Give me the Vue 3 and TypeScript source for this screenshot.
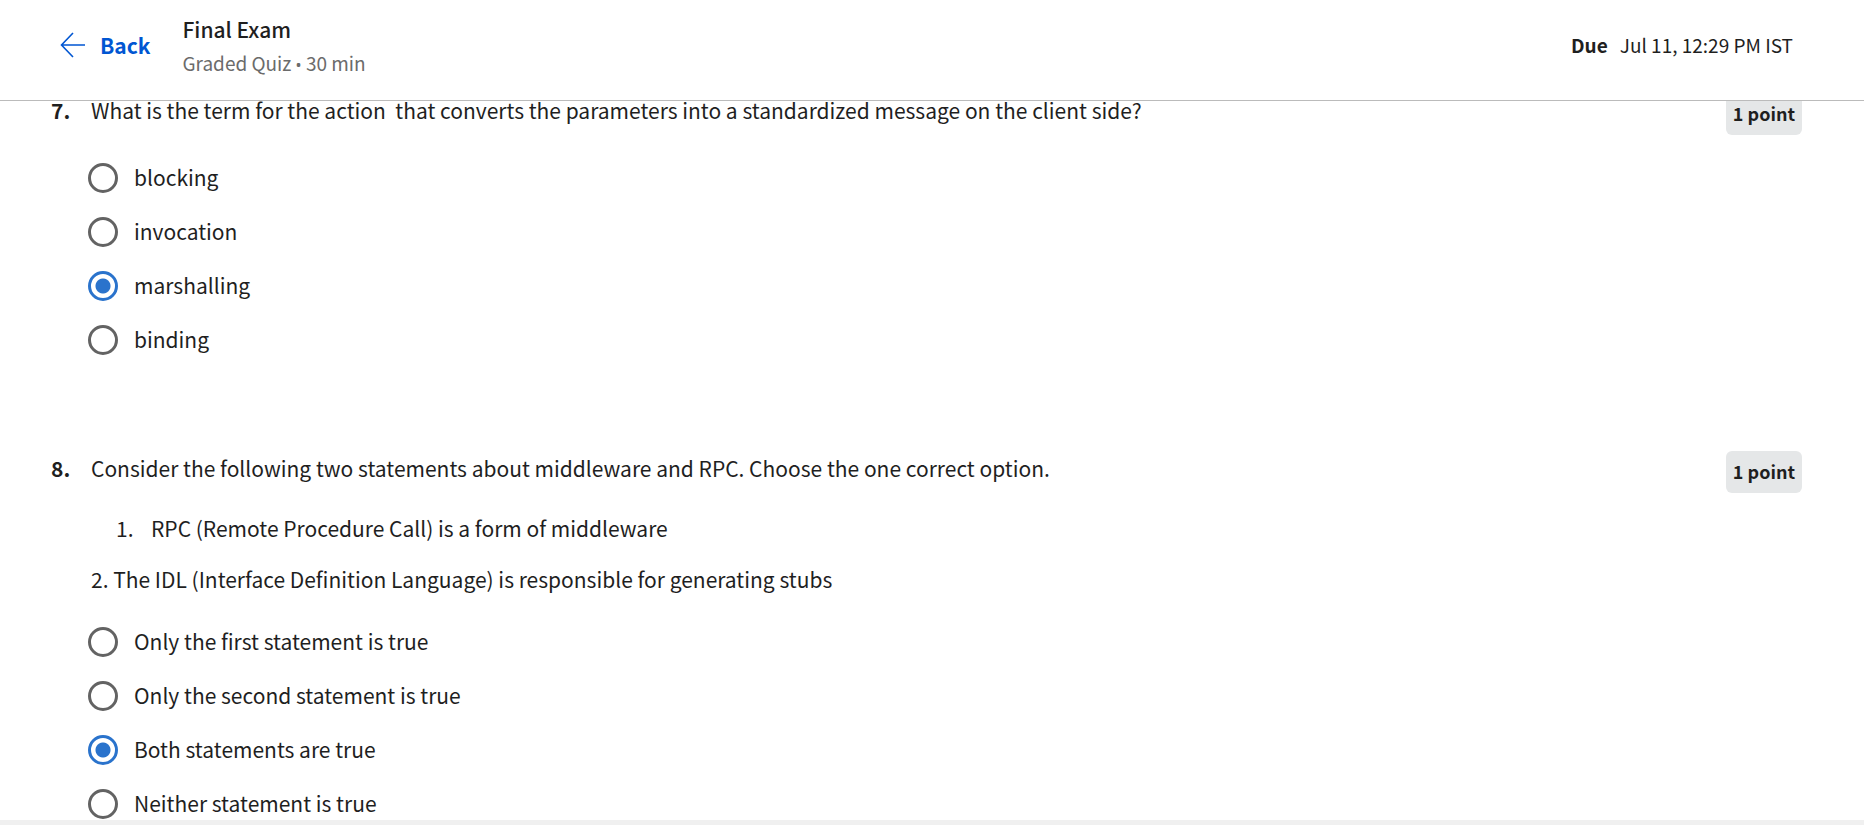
<script setup lang="ts">
import { reactive } from 'vue'

interface Question {
  id: number
  stem: string
  listed?: string[]
  note?: string
  options: string[]
}

const questions: Question[] = [
  {
    id: 7,
    stem: 'What is the term for the action\u00a0 that converts the parameters into a standardized message on the client side?',
    options: ['blocking', 'invocation', 'marshalling', 'binding'],
  },
  {
    id: 8,
    stem: 'Consider the following two statements about middleware and RPC. Choose the one correct option.',
    listed: ['RPC (Remote Procedure Call) is a form of middleware'],
    note: '2. The IDL (Interface Definition Language) is responsible for generating stubs',
    options: [
      'Only the first statement is true',
      'Only the second statement is true',
      'Both statements are true',
      'Neither statement is true',
    ],
  },
]

const answers = reactive<Record<number, string>>({
  7: 'marshalling',
  8: 'Both statements are true',
})
</script>

<template>
  <div class="page">
    <header class="header">
      <a class="back" href="#">
        <svg class="arrow" viewBox="0 0 26 26" aria-hidden="true">
          <path d="M25 13H1.5M13 1L1.5 13l11.5 12" />
        </svg>
        <span>Back</span>
      </a>
      <div class="heading">
        <h1 class="title">Final Exam</h1>
        <p class="subtitle">Graded Quiz <span class="bullet">•</span> 30 min</p>
      </div>
      <p class="due"><strong>Due</strong><span>Jul 11, 12:29 PM IST</span></p>
    </header>

    <main class="content">
      <div class="questions">
        <section v-for="q in questions" :key="q.id" class="question">
          <span class="number">{{ q.id }}.</span>
          <div class="body">
            <p :id="`stem-${q.id}`" class="text">{{ q.stem }}</p>
            <ol v-if="q.listed" class="listed">
              <li v-for="(item, i) in q.listed" :key="item">
                <span>{{ i + 1 }}.</span><span>{{ item }}</span>
              </li>
            </ol>
            <p v-if="q.note" class="text note">{{ q.note }}</p>
            <div class="options" role="radiogroup" :aria-labelledby="`stem-${q.id}`">
              <label v-for="option in q.options" :key="option" class="option">
                <input v-model="answers[q.id]" type="radio" :name="`q${q.id}`" :value="option" />
                <span>{{ option }}</span>
              </label>
            </div>
          </div>
          <span class="points">1 point</span>
        </section>
      </div>
    </main>
    <div class="strip"></div>
  </div>
</template>

<style>
body {
  margin: 0;
  background: #fff;
}
</style>

<style scoped>
.page {
  display: flex;
  flex-direction: column;
  height: 100vh;
  overflow: hidden;
  color: #1f1f1f;
  font-family: "Noto Sans CJK SC", "Noto Sans", sans-serif;
  font-size: 21px;
  line-height: 34px;
}

p,
h1,
ol {
  margin: 0;
  padding: 0;
}

.header {
  display: flex;
  flex: none;
  box-sizing: border-box;
  height: 101px;
  align-items: flex-start;
  padding: 12px 71px 0 60px;
  border-bottom: 1px solid #bbb;
}

.back {
  display: flex;
  align-items: center;
  gap: 14px;
  margin: 16px 32px 0 0;
  color: #0056d2;
  font-weight: 700;
  text-decoration: none;
}

.arrow {
  width: 26px;
  height: 26px;
  fill: none;
  stroke: currentColor;
  stroke-width: 1.6;
}

.title {
  font-size: 21px;
  font-weight: 500;
}

.subtitle {
  color: #6b6b6b;
  font-size: 19px;
}

.bullet {
  font-family: "Noto Sans", sans-serif;
  font-size: 16px;
  line-height: 1;
}

.due {
  display: flex;
  gap: 12px;
  margin: 16px 0 0 auto;
  font-size: 19px;
}

.content {
  flex: 1;
  min-height: 0;
  overflow: hidden;
}

.questions {
  display: flex;
  flex-direction: column;
  gap: 84px;
  margin-top: -8px;
  padding: 0 62px 0 51px;
}

.question {
  display: grid;
  grid-template-columns: 40px 1fr auto;
  align-items: start;
}

.number {
  font-weight: 700;
}

.listed {
  margin: 26px 0 17px;
  padding-left: 25px;
  list-style: none;
}

.listed li {
  display: grid;
  grid-template-columns: 35px 1fr;
}

.options {
  margin-top: 24px;
}

.note + .options {
  margin-top: 19px;
}

.option {
  display: flex;
  align-items: center;
  gap: 16px;
  height: 54px;
}

.option input {
  flex: none;
  box-sizing: border-box;
  width: 30px;
  height: 30px;
  margin: 0 0 0 -3px;
  border: 3px solid #636363;
  border-radius: 50%;
  background: #fff;
  appearance: none;
}

.option input:checked {
  border-color: #2a73cc;
  background: radial-gradient(circle, #2a73cc 7px, #fff 8px);
}

.option span {
  padding-bottom: 2px;
}

.points {
  padding: 0 7px 2px;
  border-radius: 6px;
  background: #e5e7e8;
  font-size: 18px;
  font-weight: 700;
  line-height: 40px;
}

.strip {
  flex: none;
  height: 5px;
  background: #f0f0f0;
}
</style>
